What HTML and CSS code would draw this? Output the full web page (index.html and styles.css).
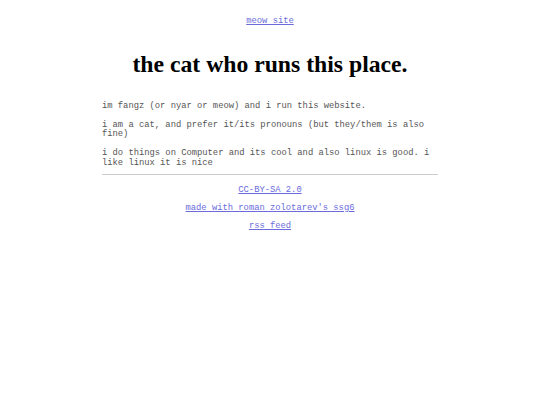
FILE: index.html
```
<!DOCTYPE html>
<html>
<head>
<meta charset="utf-8">
<title>meow site</title>
<link rel="stylesheet" href="styles.css">
</head>
<body>
<header class="site-header">
<a href="#" class="site-link">meow site</a>
</header>
<main class="content">
<h1 class="title">the cat who runs this place.</h1>
<p>im fangz (or nyar or meow) and i run this website.</p>
<p>i am a cat, and prefer it/its pronouns (but they/them is also fine)</p>
<p>i do things on Computer and its cool and also linux is good. i like linux it is nice</p>
</main>
<footer class="site-footer">
<hr class="rule">
<p><a href="#">CC-BY-SA 2.0</a></p>
<p><a href="#">made with roman zolotarev's ssg6</a></p>
<p><a href="#">rss feed</a></p>
</footer>
</body>
</html>
```
FILE: styles.css
```
html, body {
  margin: 0;
  padding: 0;
  background: #fff;
}
body {
  font-family: "Liberation Mono", "Courier New", monospace;
  font-size: 8.8px;
  line-height: 9.5px;
  color: #555;
  width: 336px;
  margin: 0 auto;
  padding-top: 17px;
}
a {
  color: #6b6bdc;
}
.site-header {
  text-align: center;
}
.title {
  font-family: "Liberation Serif", "Times New Roman", serif;
  font-size: 23.7px;
  line-height: 28px;
  color: #000;
  text-align: center;
  margin: 23px 0 24px;
}
.content p {
  margin: 9.5px 0;
}
.content p:last-child {
  margin-bottom: 6px;
}
.rule {
  border: 0;
  border-top: 1px solid #ccc;
  margin: 0 0 11px;
}
.site-footer {
  text-align: center;
}
.site-footer p {
  margin: 8.5px 0;
}
```
